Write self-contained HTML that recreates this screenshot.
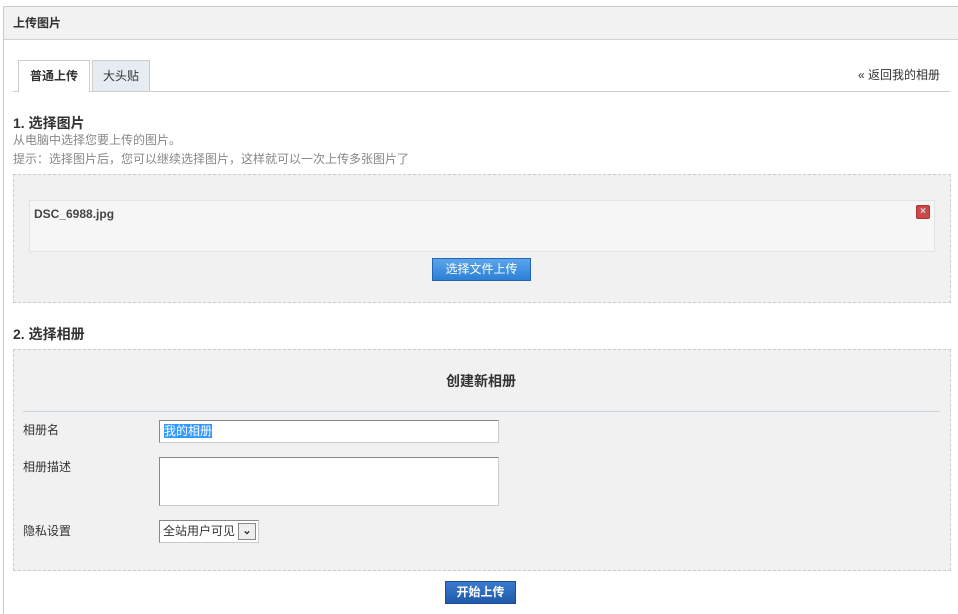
<!DOCTYPE html>
<html><head><meta charset="utf-8"><style>
*{margin:0;padding:0;box-sizing:border-box}
html,body{width:958px;height:614px;overflow:hidden}
body{background:#fff;position:relative;font-family:"Liberation Sans","Noto Sans CJK SC",sans-serif;font-size:12px;color:#333}
.a{position:absolute;white-space:nowrap}
</style></head><body>
<div class="a" style="left:3px;top:6px;width:955px;height:608px;border:1px solid #ccc;border-right:none;border-bottom:none"></div>
<div class="a" style="left:4px;top:7px;width:954px;height:33px;background:#f2f2f2;border-bottom:1px solid #ccd3d9"></div>
<div class="a" style="left:13px;top:15px;font-weight:bold;line-height:16px">上传图片</div>
<div class="a" style="left:13px;top:91px;width:937px;height:1px;background:#ccc"></div>
<div class="a" style="left:18px;top:60px;width:72px;height:32px;background:#fff;border:1px solid #ccc;border-bottom:none;text-align:center;line-height:30px;font-weight:bold">普通上传</div>
<div class="a" style="left:92px;top:60px;width:58px;height:31px;background:#e6ecf2;border:1px solid #ccc;border-bottom:none;text-align:center;line-height:30px">大头贴</div>
<div class="a" style="left:858px;top:67px;line-height:16px">« 返回我的相册</div>
<div class="a" style="left:13px;top:115px;font-weight:bold;font-size:14px;line-height:17px">1. 选择图片</div>
<div class="a" style="left:13px;top:132px;color:#888;line-height:16px">从电脑中选择您要上传的图片。</div>
<div class="a" style="left:13px;top:151px;color:#888;line-height:16px">提示：选择图片后，您可以继续选择图片，这样就可以一次上传多张图片了</div>
<div class="a" style="left:13px;top:174px;width:938px;height:129px;background:#f1f1f1;border:1px dashed #ccc"></div>
<div class="a" style="left:29px;top:200px;width:906px;height:52px;background:#f6f6f6;border:1px solid #e3e3e3"></div>
<div class="a" style="left:34px;top:206px;font-weight:bold;line-height:16px;color:#444">DSC_6988.jpg</div>
<div class="a" style="left:916px;top:205px;width:14px;height:14px;background:#c94a4a;border:1px solid #a33;border-radius:2px;color:#ddd;font-size:10px;line-height:12px;text-align:center;font-weight:bold">×</div>
<div class="a" style="left:432px;top:258px;width:99px;height:23px;background:linear-gradient(#5aa6ec,#2d7fd6);border:1px solid #2265b5;color:#fff;text-align:center;line-height:21px">选择文件上传</div>
<div class="a" style="left:13px;top:326px;font-weight:bold;font-size:14px;line-height:17px">2. 选择相册</div>
<div class="a" style="left:13px;top:349px;width:938px;height:222px;background:#f1f1f1;border:1px dashed #ccc"></div>
<div class="a" style="left:446px;top:372px;font-weight:bold;font-size:14px;line-height:18px">创建新相册</div>
<div class="a" style="left:23px;top:411px;width:917px;height:1px;background:#c8d4dc"></div>
<div class="a" style="left:23px;top:422px;line-height:16px">相册名</div>
<div class="a" style="left:23px;top:459px;line-height:16px">相册描述</div>
<div class="a" style="left:23px;top:523px;line-height:16px">隐私设置</div>
<div class="a" style="left:159px;top:420px;width:340px;height:23px;background:#fff;border:1px solid #ccc;border-top-color:#888;border-left-color:#888"><span style="position:absolute;left:4px;top:3px;background:#3399ff;color:#fff;line-height:14px">我的相册</span></div>
<div class="a" style="left:159px;top:457px;width:340px;height:49px;background:#fff;border:1px solid #ccc;border-top-color:#888;border-left-color:#888"></div>
<div class="a" style="left:159px;top:520px;width:100px;height:23px;background:#fff;border:1px solid #ccc;border-top-color:#888;border-left-color:#888;line-height:21px;padding-left:3px">全站用户可见<span style="position:absolute;right:2px;top:2px;width:18px;height:17px;border:1px solid #888;background:#eee;font-size:11px;line-height:15px;text-align:center;font-weight:bold">⌄</span></div>
<div class="a" style="left:445px;top:581px;width:71px;height:23px;background:linear-gradient(#3a7bd0,#1f5aa8);border:1px solid #1a4e94;color:#fff;text-align:center;line-height:21px;font-weight:bold">开始上传</div>
</body></html>
